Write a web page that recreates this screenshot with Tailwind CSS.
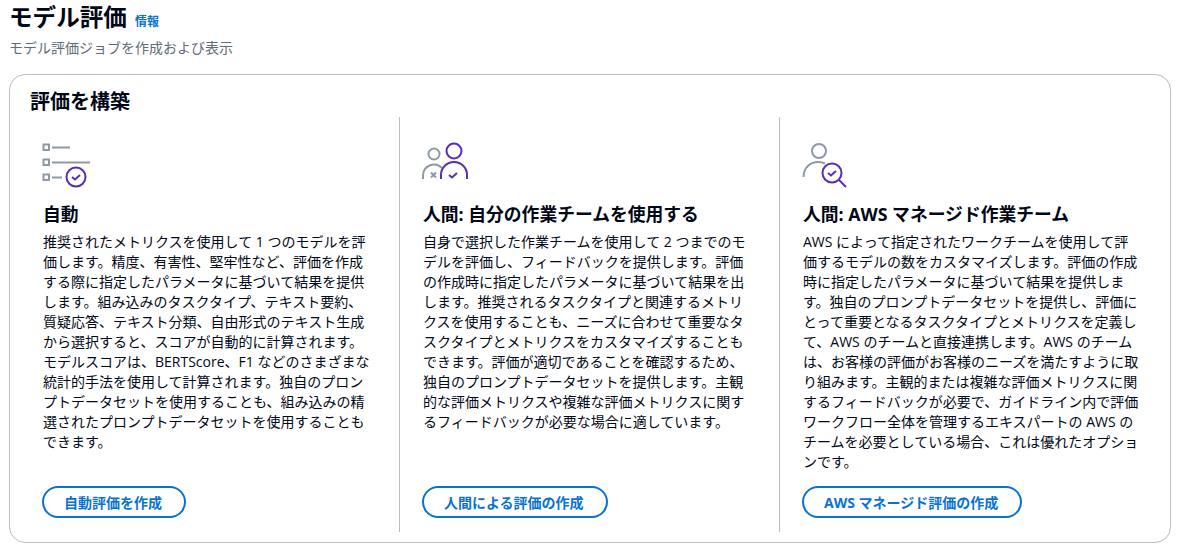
<!DOCTYPE html>
<html lang="ja">
<head>
  <meta charset="UTF-8">
  <title>モデル評価</title>
  <script src="https://cdn.jsdelivr.net/npm/@tailwindcss/browser@4"></script>
</head>
<body class="bg-white text-[#000716] font-['Open_Sans','Noto_Sans_CJK_JP',sans-serif] overflow-hidden">
  <div class="px-[9px] pt-[2px]">
    <div class="flex items-baseline gap-[8px] h-[32px]">
      <h1 class="text-[23.6px] leading-[30px] font-bold">モデル評価</h1>
      <a class="text-[12px] font-bold text-[#0972d3]">情報</a>
    </div>
    <p class="text-[14px] leading-[20px] mt-[4px] text-[#5f6b7a]">モデル評価ジョブを作成および表示</p>

    <section class="mt-[16px] w-[1162px] h-[469px] border border-[#b6bec9] rounded-[16px] flex flex-col pl-[9px]">
      <h2 class="text-[20px] leading-[24px] font-bold pl-[11px] pt-[15px] h-[42px]">評価を構築</h2>
      <div class="grid grid-cols-[380px_380px_380px] h-[415px]">

        <div class="flex flex-col pl-[24px] pr-[24px] pt-[25px]">
          <svg class="w-[50px] h-[46px] shrink-0 -ml-[2px]" viewBox="0 0 50 46" fill="none" stroke-width="2">
            <g stroke="#8d99a8">
              <rect x="2.5" y="2.5" width="5.5" height="5.5"/>
              <path d="M11 5.5h18"/>
              <rect x="2.5" y="17.5" width="5.5" height="5.5"/>
              <path d="M11 20.5h38"/>
              <rect x="2.5" y="32.5" width="5.5" height="5.5"/>
              <path d="M11 35.5h10"/>
            </g>
            <circle cx="35" cy="35" r="9.5" stroke="#5a2db5"/>
            <path d="M31 35l3 2.5 5-4.5" stroke="#5a2db5"/>
          </svg>
          <h3 class="text-[17.8px] leading-[22px] font-bold mt-[15px]">自動</h3>
          <p class="text-[14px] leading-[20px] mt-[7px]">推奨されたメトリクスを使用して 1 つのモデルを評価します。精度、有害性、堅牢性など、評価を作成する際に指定したパラメータに基づいて結果を提供します。組み込みのタスクタイプ、テキスト要約、質疑応答、テキスト分類、自由形式のテキスト生成から選択すると、スコアが自動的に計算されます。モデルスコアは、BERTScore、F1 などのさまざまな統計的手法を使用して計算されます。独自のプロンプトデータセットを使用することも、組み込みの精選されたプロンプトデータセットを使用することもできます。</p>
          <button class="mt-auto mb-[14px] -ml-[1px] self-start h-[32px] pl-[20px] pr-[22px] rounded-full border-2 border-[#0972d3] text-[#0972d3] text-[14px] font-bold">自動評価を作成</button>
        </div>

        <div class="flex flex-col border-l border-[#b6bec9] pl-[23px] pr-[24px] pt-[25px]">
          <svg class="w-[50px] h-[46px] shrink-0 -ml-[2px]" viewBox="0 0 50 46" fill="none" stroke-width="2">
            <g stroke="#8d99a8">
              <circle cx="13" cy="12" r="5.5"/>
              <path d="M2 37v-4a11 11 0 0 1 19-7"/>
              <path d="M10 30.5l5 5M15 30.5l-5 5"/>
            </g>
            <g stroke="#5a2db5">
              <circle cx="33" cy="9" r="7.5"/>
              <path d="M20 37v-4a13 13 0 0 1 26 0v4"/>
              <path d="M28 33l3 2.5 5-4.5"/>
            </g>
          </svg>
          <h3 class="text-[17.8px] leading-[22px] font-bold mt-[15px]">人間: 自分の作業チームを使用する</h3>
          <p class="text-[14px] leading-[20px] mt-[7px]">自身で選択した作業チームを使用して 2 つまでのモデルを評価し、フィードバックを提供します。評価の作成時に指定したパラメータに基づいて結果を出します。推奨されるタスクタイプと関連するメトリクスを使用することも、ニーズに合わせて重要なタスクタイプとメトリクスをカスタマイズすることもできます。評価が適切であることを確認するため、独自のプロンプトデータセットを提供します。主観的な評価メトリクスや複雑な評価メトリクスに関するフィードバックが必要な場合に適しています。</p>
          <button class="mt-auto mb-[14px] -ml-[1px] self-start h-[32px] pl-[20px] pr-[22px] rounded-full border-2 border-[#0972d3] text-[#0972d3] text-[14px] font-bold">人間による評価の作成</button>
        </div>

        <div class="flex flex-col border-l border-[#b6bec9] pl-[23px] pr-[18px] pt-[25px]">
          <svg class="w-[50px] h-[46px] shrink-0 -ml-[2px]" viewBox="0 0 50 46" fill="none" stroke-width="2">
            <g stroke="#8d99a8">
              <circle cx="18" cy="9" r="7"/>
              <path d="M2.5 35C2.5 25 10 20 17 20c3 0 5 .5 7 1.5"/>
            </g>
            <g stroke="#5a2db5">
              <circle cx="31" cy="31" r="9.5"/>
              <path d="M27 31l3 2.5 5-4.5"/>
              <path d="M38 38l7 7"/>
            </g>
          </svg>
          <h3 class="text-[17.8px] leading-[22px] font-bold mt-[15px]">人間: AWS マネージド作業チーム</h3>
          <p class="text-[14px] leading-[20px] mt-[7px]">AWS によって指定されたワークチームを使用して評価するモデルの数をカスタマイズします。評価の作成時に指定したパラメータに基づいて結果を提供します。独自のプロンプトデータセットを提供し、評価にとって重要となるタスクタイプとメトリクスを定義して、AWS のチームと直接連携します。AWS のチームは、お客様の評価がお客様のニーズを満たすように取り組みます。主観的または複雑な評価メトリクスに関するフィードバックが必要で、ガイドライン内で評価ワークフロー全体を管理するエキスパートの AWS のチームを必要としている場合、これは優れたオプションです。</p>
          <button class="mt-auto mb-[14px] -ml-[1px] self-start h-[32px] pl-[20px] pr-[22px] rounded-full border-2 border-[#0972d3] text-[#0972d3] text-[14px] font-bold">AWS マネージド評価の作成</button>
        </div>

      </div>
    </section>
  </div>
</body>
</html>
